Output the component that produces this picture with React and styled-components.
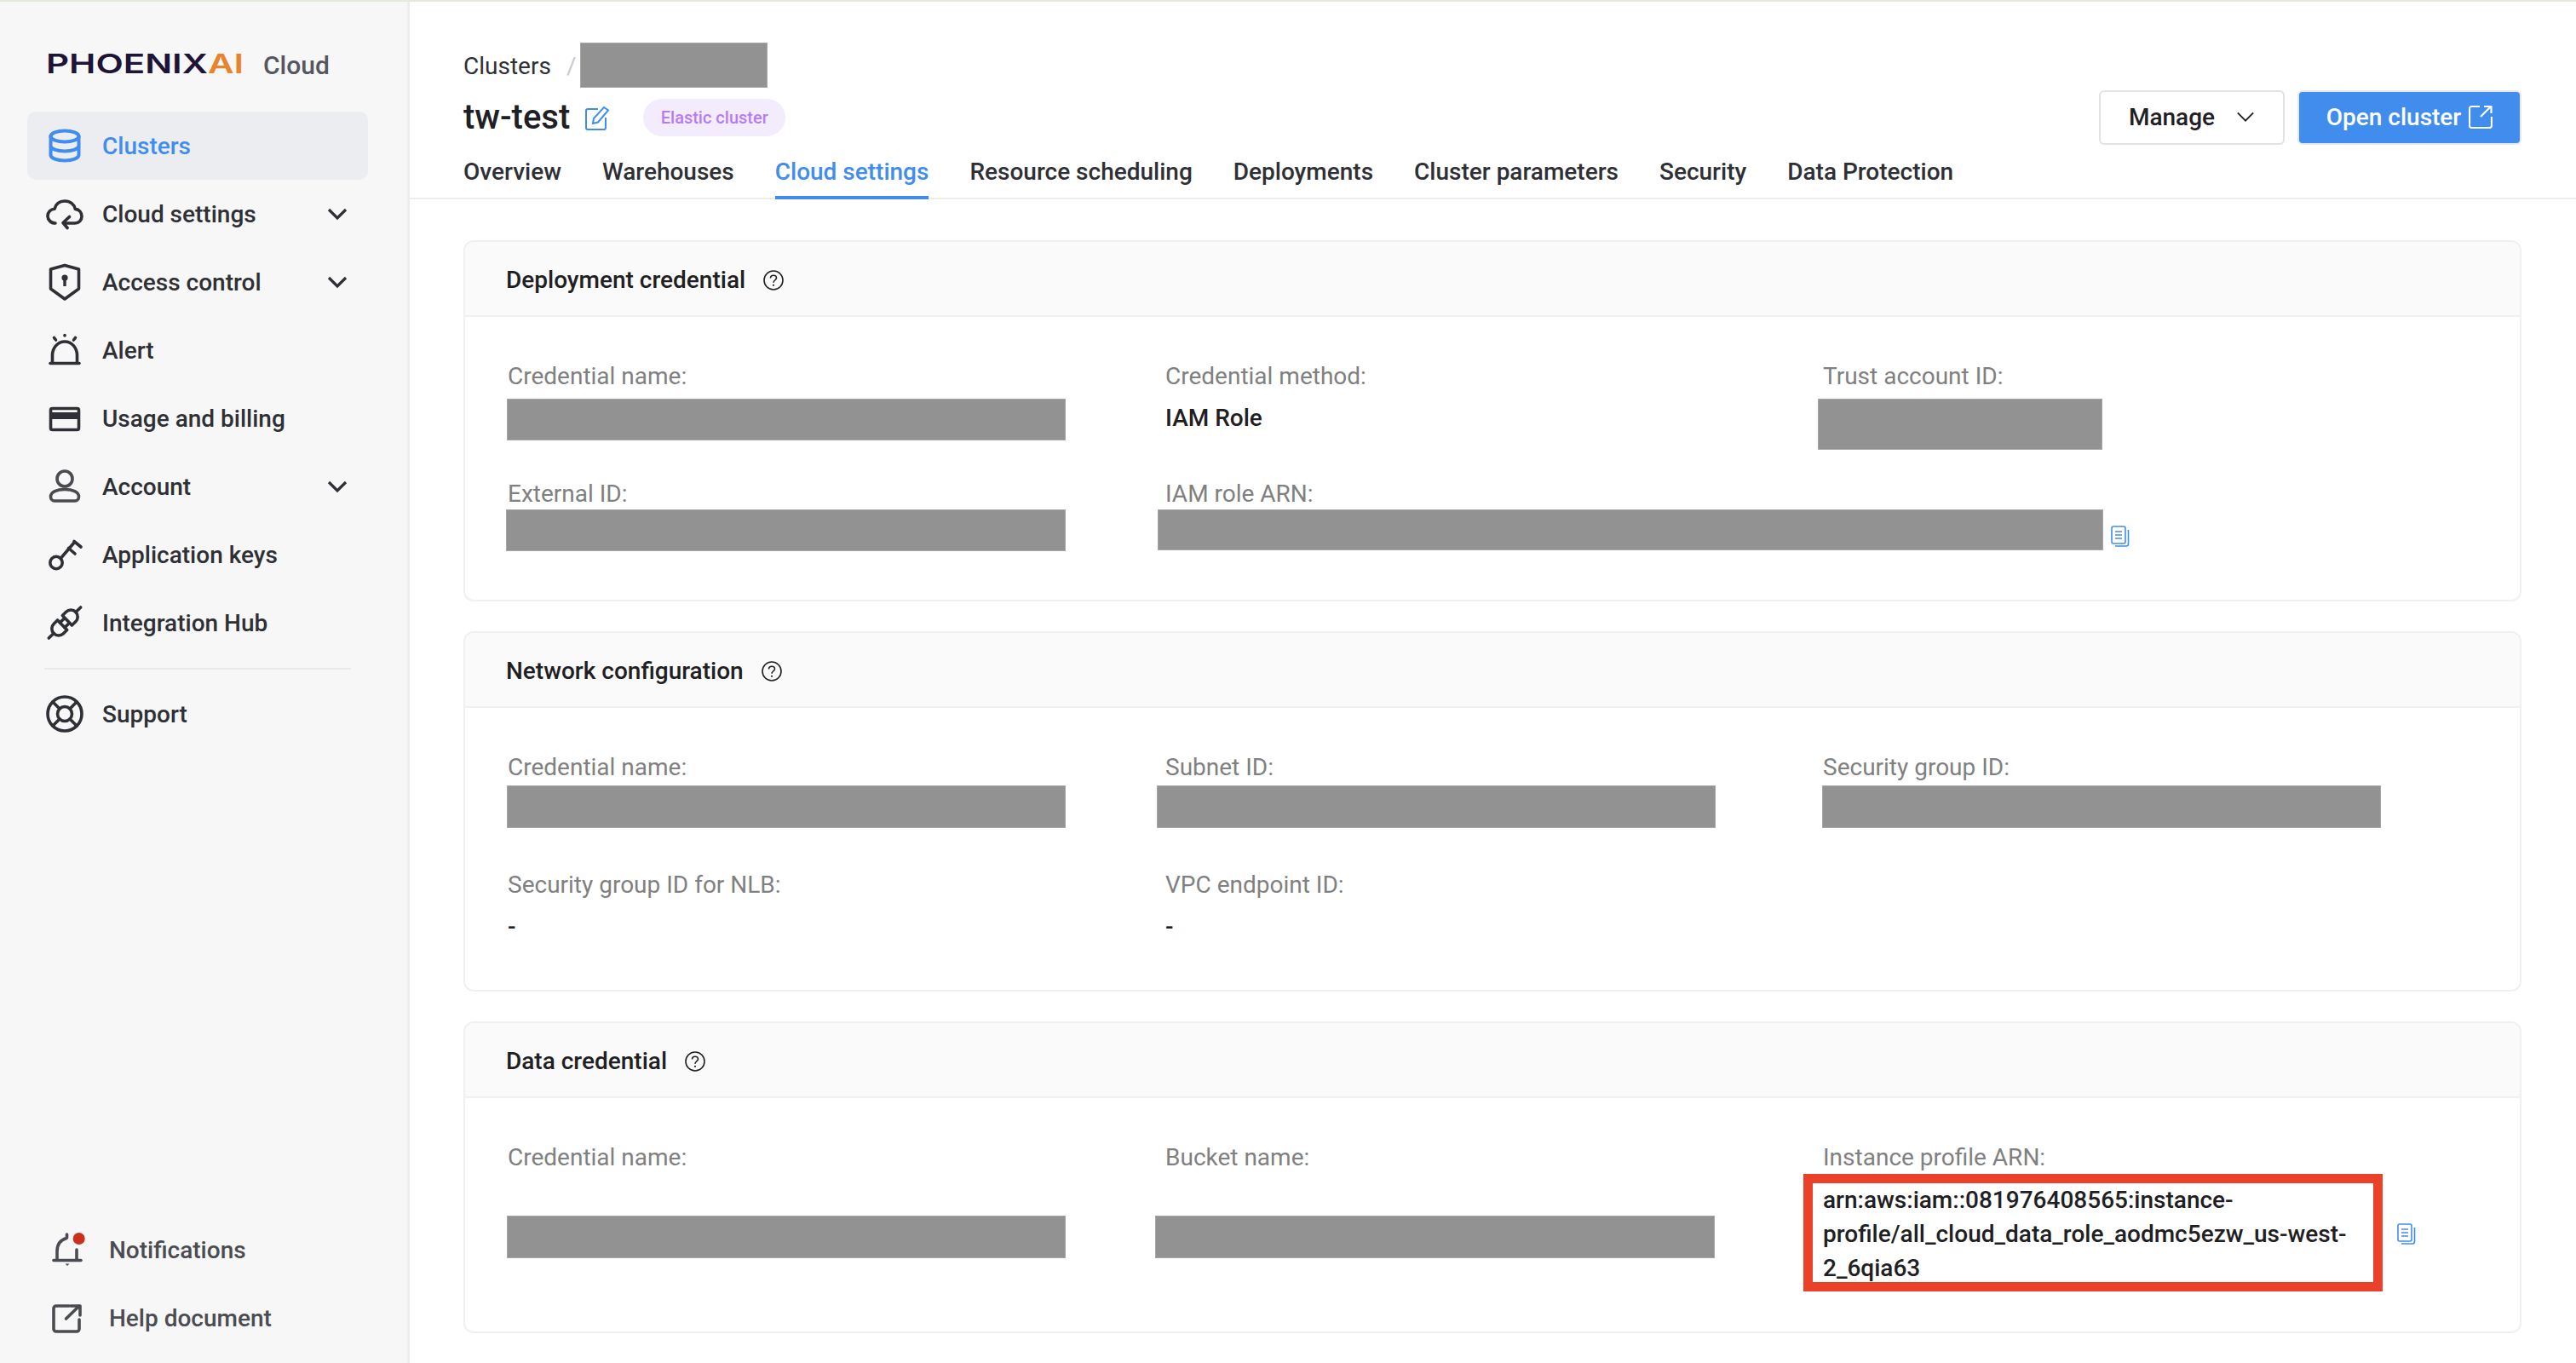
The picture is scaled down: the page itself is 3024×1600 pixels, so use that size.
import styled, { createGlobalStyle } from "styled-components";

const GlobalStyle = createGlobalStyle`
    html, body {
        margin: 0;
        padding: 0;
        background: #fff;
    }
    body {
        font-family: Roboto, "Liberation Sans", sans-serif;
        color: #1f2023;
    }
    * {
        box-sizing: border-box;
    }
`;

const BLUE = "#418ded";

const Page = styled.div`
    width: 3024px;
    height: 1600px;
    overflow: hidden;
    display: flex;
    flex-direction: column;
`;

const TopLine = styled.div`
    height: 2px;
    flex: none;
    background: #e2eadb;
`;

const Shell = styled.div`
    flex: 1;
    display: flex;
    min-height: 0;
`;

/* sidebar */
const Sidebar = styled.aside`
    width: 481px;
    flex: none;
    background: #f7f7f7;
    border-right: 3px solid #ededed;
    display: flex;
    flex-direction: column;
    padding-bottom: 13px;
`;

const Brand = styled.div`
    height: 129px;
    flex: none;
    display: flex;
    align-items: flex-start;
    padding: 58px 0 0 54px;
`;

const LogoText = styled.div`
    font-family: Inter, sans-serif;
    font-weight: 600;
    font-size: 31px;
    line-height: 30px;
    width: 232px;
    color: #1e1438;
    transform: scaleX(1.355);
    transform-origin: left center;
    white-space: nowrap;
    span {
        color: #e8842e;
    }
`;

const BrandCloud = styled.div`
    margin-left: 23px;
    margin-top: 2px;
    font-size: 30px;
    line-height: 30px;
    font-weight: 500;
    color: #55565f;
`;

const NavItem = styled.div`
    width: 400px;
    height: 80px;
    margin-left: 32px;
    flex: none;
    display: flex;
    align-items: center;
    gap: ${(p) => (p.$footer ? "27px" : "22px")};
    padding-left: ${(p) => (p.$footer ? "25px" : "22px")};
    padding-right: 24px;
    border-radius: 10px;
    font-size: 28px;
    font-weight: 500;
    color: ${(p) => (p.$active ? BLUE : p.$footer ? "#4a4c52" : "#2e3035")};
    background: ${(p) => (p.$active ? "#ecedf0" : "transparent")};
    svg {
        flex: none;
    }
`;

const NavLabel = styled.span`
    flex: 1;
`;

const Divider = styled.div`
    width: 360px;
    height: 2px;
    margin: 13px 0 12px 52px;
    flex: none;
    background: #e9e9ee;
`;

const SideFooter = styled.div`
    margin-top: auto;
`;

/* main column */
const Main = styled.main`
    flex: 1;
    min-width: 0;
    display: flex;
    flex-direction: column;
`;

const HeaderTop = styled.div`
    display: flex;
    justify-content: space-between;
    align-items: flex-start;
    padding: 48px 64px 0 63px;
`;

const Crumbs = styled.div`
    height: 53px;
    display: flex;
    align-items: center;
    font-size: 28px;
    color: #2e3035;
`;

const CrumbText = styled.span`
    padding-top: 2px;
`;

const CrumbSep = styled.span`
    color: #c8cad0;
    margin: 2px 5px 0 18px;
`;

const TitleRow = styled.div`
    margin-top: 13px;
    height: 44px;
    display: flex;
    align-items: center;
`;

const Title = styled.h1`
    margin: 0;
    font-size: 40px;
    line-height: 44px;
    font-weight: 500;
    color: #1f2023;
`;

const EditIcon = styled.svg`
    margin: 0 39px 0 18px;
`;

const Badge = styled.span`
    height: 44px;
    width: 167px;
    border-radius: 22px;
    background: #f3ecfd;
    color: #b57cf3;
    font-size: 20px;
    font-weight: 500;
    display: flex;
    align-items: center;
    justify-content: center;
`;

const Actions = styled.div`
    margin-top: 56px;
    display: flex;
    gap: 15px;
`;

const Button = styled.button`
    height: 64px;
    width: ${(p) => p.$width}px;
    font-family: inherit;
    font-size: 28px;
    font-weight: 500;
    display: flex;
    align-items: center;
    justify-content: center;
    gap: ${(p) => (p.$primary ? "9px" : "25px")};
    border-radius: 6px;
    border: 2px solid ${(p) => (p.$primary ? "#e6e8ec" : "#e2e2e2")};
    color: ${(p) => (p.$primary ? "#fff" : "#1f2023")};
    background: ${(p) => (p.$primary ? BLUE : "#fff")};
    padding: 0 0 2px;
`;

const Tabs = styled.nav`
    margin-top: 2px;
    height: 62px;
    flex: none;
    display: flex;
    gap: 48px;
    padding-left: 63px;
    border-bottom: 2px solid #eeeeee;
`;

const Tab = styled.div`
    height: 62px;
    padding-top: 10px;
    font-size: 28px;
    line-height: 40px;
    font-weight: 500;
    color: ${(p) => (p.$active ? BLUE : "#2e3035")};
    border-bottom: 4px solid ${(p) => (p.$active ? BLUE : "transparent")};
`;

const Content = styled.div`
    padding: 48px 64px 0 63px;
    display: flex;
    flex-direction: column;
    gap: 35px;
`;

const Card = styled.section`
    height: ${(p) => p.$height}px;
    border: 2px solid #f0f0f0;
    border-radius: 12px;
    overflow: hidden;
`;

const CardHeader = styled.header`
    height: 88px;
    padding: 3px 0 0 48px;
    background: #fafafa;
    border-bottom: 2px solid #f0f0f0;
    display: flex;
    align-items: center;
    gap: 21px;
    font-size: 28px;
    font-weight: 500;
    color: #1f2023;
`;

const CardBody = styled.div`
    padding: 52px 0 0 50px;
    display: grid;
    grid-template-columns: repeat(3, 772px);
    grid-auto-rows: 138px;
`;

const Field = styled.div`
    min-width: 0;
`;

const Label = styled.div`
    font-size: 28px;
    line-height: 36px;
    color: #808080;
`;

const Value = styled.div`
    margin-top: 13px;
    font-size: 28px;
    line-height: 36px;
    font-weight: 500;
    color: #1f2023;
`;

const ValueRow = styled.div`
    display: flex;
    align-items: flex-start;
    margin-top: ${(p) => p.$top}px;
    margin-left: ${(p) => p.$left || 0}px;
`;

const Redacted = styled.div`
    flex: none;
    width: ${(p) => p.$w}px;
    height: ${(p) => p.$h}px;
    background: #929292;
    border: 1px solid #a6a6a6;
`;

const CopyIcon = styled.svg`
    flex: none;
    margin: ${(p) => p.$top}px 0 0 ${(p) => p.$left}px;
`;

const Highlight = styled.div`
    flex: none;
    width: 680px;
    height: 138px;
    border: 11px solid #ea4228;
    padding-left: 12px;
    font-size: 28px;
    line-height: 40px;
    font-weight: 500;
    color: #1f2023;
`;

/* icons */
const NavIcon = ({ children }) => (
    <svg
        width="44"
        height="44"
        viewBox="0 0 44 44"
        fill="none"
        stroke="currentColor"
        strokeWidth="3.6"
        strokeLinecap="round"
        strokeLinejoin="round"
    >
        {children}
    </svg>
);

const icons = {
    clusters: (
        <NavIcon>
            <ellipse cx="22" cy="11" rx="16.5" ry="6.5" strokeWidth="4" />
            <path
                d="M5.5 11v22c0 3.6 7.4 6.5 16.5 6.5s16.5-2.9 16.5-6.5V11M5.5 22c0 3.6 7.4 6.5 16.5 6.5s16.5-2.9 16.5-6.5"
                strokeWidth="4"
            />
        </NavIcon>
    ),
    cloud: (
        <NavIcon>
            <path d="M11 33C5.5 33 2 28.8 2 24.5C2 20 5.5 16.5 10 16.2C11.5 10.5 16 7 22 7C28.5 7 33.2 11 34.3 16.4C39 17 42 20.5 42 25C42 29.5 38.5 33 34 33H21" />
            <path d="M27.5 25.5L20 32.5L25 38.5" />
        </NavIcon>
    ),
    shield: (
        <NavIcon>
            <path d="M5.5 7L22 2.5L38.5 7V30L22 42L5.5 30Z" />
            <circle cx="22" cy="17" r="3.6" fill="currentColor" stroke="none" />
            <path d="M22 18V27" strokeWidth="3.4" strokeLinecap="butt" />
        </NavIcon>
    ),
    alert: (
        <NavIcon>
            <path d="M7.5 37V28C7.5 19 14 12 22 12S36.5 19 36.5 28V37" />
            <path d="M5 37.5H39" />
            <path d="M22 4.5V5M9.5 7.5L11.5 10M34.5 7.5L32.5 10" />
        </NavIcon>
    ),
    billing: (
        <NavIcon>
            <rect x="5.5" y="10.5" width="33" height="25" rx="2" />
            <rect x="5" y="15" width="34" height="8" fill="currentColor" stroke="none" />
        </NavIcon>
    ),
    account: (
        <NavIcon>
            <circle cx="22" cy="13" r="9" stroke="#4a4a4f" />
            <path
                d="M5.5 34C5.5 28.5 13 25.5 22 25.5S38.5 28.5 38.5 34C38.5 37 36.5 39 34 39H10C7.5 39 5.5 37 5.5 34Z"
                stroke="#4a4a4f"
            />
        </NavIcon>
    ),
    key: (
        <NavIcon>
            <circle cx="12" cy="31.5" r="7.2" />
            <path d="M17.2 26.5L33 8M33 6.5L41 13M26.5 14.5L34 21" />
        </NavIcon>
    ),
    plug: (
        <NavIcon>
            <g transform="rotate(-44 22 22)">
                <path d="M-4 22H4M40 22H48M18 18H24M18 26H24" />
                <path d="M18 14H12a8 8 0 0 0 0 16H18Z" />
                <path d="M26 14H32a8 8 0 0 1 0 16H26Z" />
            </g>
        </NavIcon>
    ),
    support: (
        <NavIcon>
            <circle cx="22" cy="22" r="20" />
            <circle cx="22" cy="22" r="8.5" />
            <path d="M8 8L16 16M36 8L28 16M8 36L16 28M36 36L28 28" />
        </NavIcon>
    ),
    bell: (
        <NavIcon>
            <path d="M6 34.5H38" />
            <path d="M10 34V24C10 16 14 10.5 21 8.5M21.5 4V8M33 34V22" />
            <path d="M19.5 38.5H24.5L22 41Z" fill="currentColor" stroke="none" />
            <circle cx="35.7" cy="9" r="7" fill="#cc2f1e" stroke="none" />
        </NavIcon>
    ),
    external: (
        <NavIcon>
            <path d="M24 8H9a3 3 0 0 0-3 3V35a3 3 0 0 0 3 3H33a3 3 0 0 0 3-3V24" />
            <path d="M20.5 23L36 8M26 8H37V19" />
        </NavIcon>
    ),
};

const Chevron = ({ size = 24, width = 3.2, color = "#2e3035" }) => (
    <svg width={size} height={size} viewBox="0 0 24 24" fill="none">
        <path d="M2 7L12 17L22 7" stroke={color} strokeWidth={width} />
    </svg>
);

const HelpIcon = () => (
    <svg width="24" height="24" viewBox="0 0 24 24" fill="none" stroke="#1f2023" strokeWidth="1.6">
        <circle cx="12" cy="12" r="11" />
        <path d="M8.5 9.5C8.5 7.5 10 6.2 12 6.2S15.5 7.5 15.5 9.3C15.5 11.6 12 12 12 14.8" />
        <circle cx="12" cy="17.8" r="1.1" fill="#1f2023" stroke="none" />
    </svg>
);

const Copy = ({ top, left }) => (
    <CopyIcon $top={top} $left={left} width="22" height="25" viewBox="0 0 22 25" fill="none" stroke={BLUE} strokeWidth="1.6">
        <rect x="1" y="1" width="16" height="20" rx="2" />
        <path d="M5 7H13M5 11H13M5 15H13" />
        <path d="M20.5 5V21.5C20.5 23 19.5 24 18 24H5" />
    </CopyIcon>
);

const navItems = [
    { key: "clusters", label: "Clusters", active: true },
    { key: "cloud", label: "Cloud settings", more: true },
    { key: "shield", label: "Access control", more: true },
    { key: "alert", label: "Alert" },
    { key: "billing", label: "Usage and billing" },
    { key: "account", label: "Account", more: true },
    { key: "key", label: "Application keys" },
    { key: "plug", label: "Integration Hub" },
];

const tabs = [
    "Overview",
    "Warehouses",
    "Cloud settings",
    "Resource scheduling",
    "Deployments",
    "Cluster parameters",
    "Security",
    "Data Protection",
];

const App = () => {
    return (
        <Page>
            <GlobalStyle />
            <TopLine />
            <Shell>
                <Sidebar>
                    <Brand>
                        <LogoText>
                            PHOENIX<span>AI</span>
                        </LogoText>
                        <BrandCloud>Cloud</BrandCloud>
                    </Brand>
                    {navItems.map((item) => (
                        <NavItem key={item.key} $active={item.active}>
                            {icons[item.key]}
                            <NavLabel>{item.label}</NavLabel>
                            {item.more && <Chevron />}
                        </NavItem>
                    ))}
                    <Divider />
                    <NavItem>
                        {icons.support}
                        <NavLabel>Support</NavLabel>
                    </NavItem>
                    <SideFooter>
                        <NavItem $footer>
                            {icons.bell}
                            <NavLabel>Notifications</NavLabel>
                        </NavItem>
                        <NavItem $footer>
                            {icons.external}
                            <NavLabel>Help document</NavLabel>
                        </NavItem>
                    </SideFooter>
                </Sidebar>
                <Main>
                    <HeaderTop>
                        <div>
                            <Crumbs>
                                <CrumbText>Clusters</CrumbText>
                                <CrumbSep>/</CrumbSep>
                                <Redacted $w={220} $h={53} />
                            </Crumbs>
                            <TitleRow>
                                <Title>tw-test</Title>
                                <EditIcon width="29" height="29" viewBox="0 0 29 29" fill="none" stroke={BLUE} strokeWidth="2">
                                    <path d="M15 4H3a2 2 0 0 0-2 2V26a2 2 0 0 0 2 2H22a2 2 0 0 0 2-2V14" />
                                    <path d="M9 21L10 15L22 2L27 5.5L15 19.5Z" />
                                </EditIcon>
                                <Badge>Elastic cluster</Badge>
                            </TitleRow>
                        </div>
                        <Actions>
                            <Button $width={218}>
                                Manage
                                <Chevron size={22} width={2} color="#1f2023" />
                            </Button>
                            <Button $width={263} $primary>
                                Open cluster
                                <svg width="28" height="28" viewBox="0 0 28 28" fill="none" stroke="#fff" strokeWidth="2.2">
                                    <path d="M13 2H3.5A2.5 2.5 0 0 0 1 4.5V24.5A2.5 2.5 0 0 0 3.5 27H24.5A2.5 2.5 0 0 0 27 24.5V14" />
                                    <path d="M14 14L26 2M18 2H26.5V10" />
                                </svg>
                            </Button>
                        </Actions>
                    </HeaderTop>
                    <Tabs>
                        {tabs.map((tab) => (
                            <Tab key={tab} $active={tab === "Cloud settings"}>
                                {tab}
                            </Tab>
                        ))}
                    </Tabs>
                    <Content>
                        <Card $height={424}>
                            <CardHeader>
                                Deployment credential
                                <HelpIcon />
                            </CardHeader>
                            <CardBody>
                                <Field>
                                    <Label>Credential name:</Label>
                                    <ValueRow $top={8} $left={-1}>
                                        <Redacted $w={656} $h={49} />
                                    </ValueRow>
                                </Field>
                                <Field>
                                    <Label>Credential method:</Label>
                                    <Value>IAM Role</Value>
                                </Field>
                                <Field>
                                    <Label>Trust account ID:</Label>
                                    <ValueRow $top={8} $left={-6}>
                                        <Redacted $w={334} $h={60} />
                                    </ValueRow>
                                </Field>
                                <Field>
                                    <Label>External ID:</Label>
                                    <ValueRow $top={0} $left={-2}>
                                        <Redacted $w={657} $h={49} />
                                    </ValueRow>
                                </Field>
                                <Field>
                                    <Label>IAM role ARN:</Label>
                                    <ValueRow $top={0} $left={-9}>
                                        <Redacted $w={1110} $h={48} />
                                        <Copy top={19} left={9} />
                                    </ValueRow>
                                </Field>
                            </CardBody>
                        </Card>
                        <Card $height={423}>
                            <CardHeader>
                                Network configuration
                                <HelpIcon />
                            </CardHeader>
                            <CardBody>
                                <Field>
                                    <Label>Credential name:</Label>
                                    <ValueRow $top={3} $left={-1}>
                                        <Redacted $w={656} $h={50} />
                                    </ValueRow>
                                </Field>
                                <Field>
                                    <Label>Subnet ID:</Label>
                                    <ValueRow $top={3} $left={-10}>
                                        <Redacted $w={656} $h={50} />
                                    </ValueRow>
                                </Field>
                                <Field>
                                    <Label>Security group ID:</Label>
                                    <ValueRow $top={3} $left={-1}>
                                        <Redacted $w={656} $h={50} />
                                    </ValueRow>
                                </Field>
                                <Field>
                                    <Label>Security group ID for NLB:</Label>
                                    <Value>-</Value>
                                </Field>
                                <Field>
                                    <Label>VPC endpoint ID:</Label>
                                    <Value>-</Value>
                                </Field>
                            </CardBody>
                        </Card>
                        <Card $height={366}>
                            <CardHeader>
                                Data credential
                                <HelpIcon />
                            </CardHeader>
                            <CardBody>
                                <Field>
                                    <Label>Credential name:</Label>
                                    <ValueRow $top={50} $left={-1}>
                                        <Redacted $w={656} $h={50} />
                                    </ValueRow>
                                </Field>
                                <Field>
                                    <Label>Bucket name:</Label>
                                    <ValueRow $top={50} $left={-12}>
                                        <Redacted $w={657} $h={50} />
                                    </ValueRow>
                                </Field>
                                <Field>
                                    <Label>Instance profile ARN:</Label>
                                    <ValueRow $top={1} $left={-23}>
                                        <Highlight>
                                            arn:aws:iam::081976408565:instance-profile/all_cloud_data_role_aodmc5ezw_us-west-2_6qia63
                                        </Highlight>
                                        <Copy top={58} left={17} />
                                    </ValueRow>
                                </Field>
                            </CardBody>
                        </Card>
                    </Content>
                </Main>
            </Shell>
        </Page>
    );
};

export default App;
